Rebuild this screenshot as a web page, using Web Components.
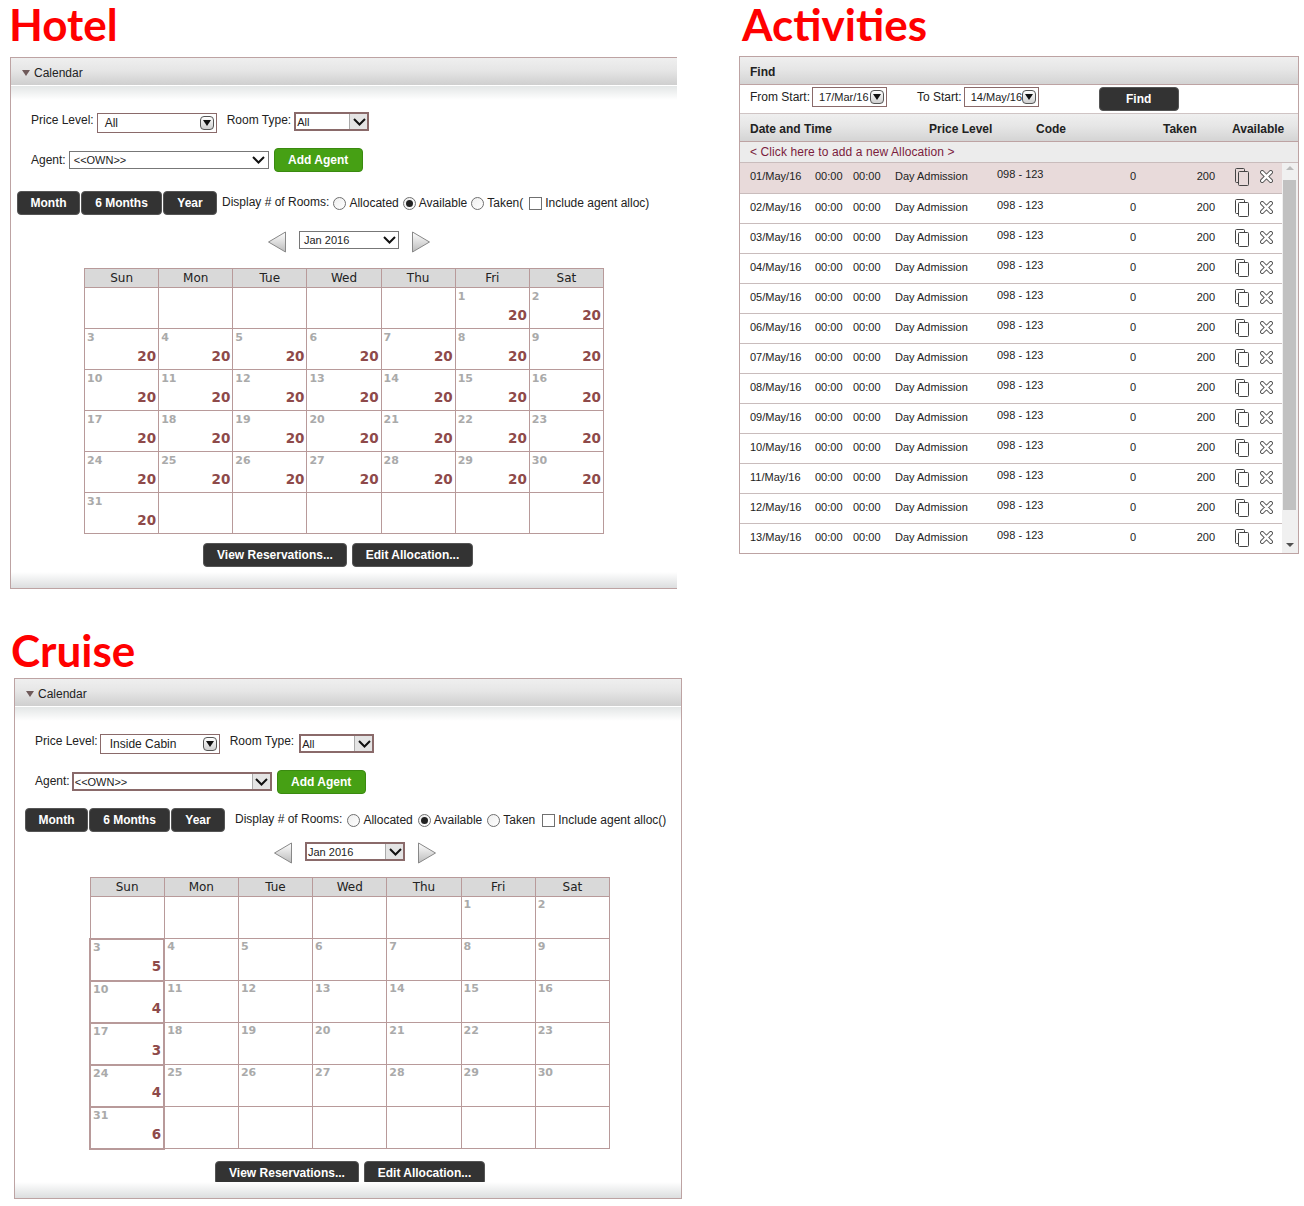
<!DOCTYPE html>
<html>
<head>
<meta charset="utf-8">
<title>Allocation screens</title>
<style>
  body { margin: 0; background: #fff; font: 12px "Liberation Sans", Arial, sans-serif; color: #222; }
</style>
</head>
<body>
<x-page>
  <x-block style="--title-h:57px; --left:10px; --title-left:-1px">
    <span slot="title">Hotel</span>
    <x-calendar-panel price="All" agent-kind="plain" taken="Taken(" alloc="Include agent alloc)" values="hotel"></x-calendar-panel>
  </x-block>
  <x-block style="--title-h:56px; --left:0px; --title-left:3px">
    <span slot="title">Activities</span>
    <x-activities></x-activities>
  </x-block>
  <x-block class="cruise" style="--title-h:78px; --title-top:26px; --left:14px; --title-left:-3px">
    <span slot="title">Cruise</span>
    <x-calendar-panel cruise price="Inside Cabin" agent-kind="box" taken="Taken" alloc="Include agent alloc()" values="cruise"></x-calendar-panel>
  </x-block>
</x-page>

<script>
const ARROW_DOWN = `<svg width="8" height="6" viewBox="0 0 8 6"><path d="M0 0h8L4 6z" fill="#111"/></svg>`;
const CHEVRON = `<svg width="13" height="8" viewBox="0 0 13 8"><path d="M1 1l5.5 5.5L12 1" fill="none" stroke="#111" stroke-width="2"/></svg>`;

class XPage extends HTMLElement {
  constructor() {
    super();
    this.attachShadow({ mode: "open" });
    this.shadowRoot.innerHTML = `
    <style>
      :host { display: grid; grid-template-columns: 739px 565px; grid-template-rows: 600px auto; width: 1304px; }
    </style>
    <slot></slot>`;
  }
}

class XBlock extends HTMLElement {
  constructor() {
    super();
    this.attachShadow({ mode: "open" });
    this.shadowRoot.innerHTML = `
    <style>
      :host { display: block; padding-left: var(--left); }
      h1 {
        margin: 0 0 0 var(--title-left);
        box-sizing: border-box;
        height: var(--title-h);
        padding-top: var(--title-top, 0);
        font: bold 44px/48px Lato, sans-serif;
        color: #f00;
      }
    </style>
    <h1><slot name="title"></slot></h1>
    <slot></slot>`;
  }
}

class XButton extends HTMLElement {
  constructor() {
    super();
    this.attachShadow({ mode: "open" });
    this.shadowRoot.innerHTML = `
    <style>
      :host {
        display: inline-flex; align-items: center; justify-content: center;
        box-sizing: border-box; height: 24px; padding: 0 13px;
        background: #333; border: 1px solid #555; border-radius: 4px;
        color: #fff; font: bold 12px "Liberation Sans", Arial, sans-serif; white-space: nowrap;
      }
      :host([green]) { background: #46a014; border-color: #3a8a10; }
    </style>
    <slot></slot>`;
  }
}

class XSelect extends HTMLElement {
  connectedCallback() {
    const kind = this.getAttribute("kind") || "plain";
    const icon = kind === "round" ? ARROW_DOWN : CHEVRON;
    this.attachShadow({ mode: "open" });
    this.shadowRoot.innerHTML = `
    <style>
      :host {
        display: flex; align-items: center; box-sizing: border-box;
        background: #fff; border: 1px solid #777; color: #222;
        font-size: 11px; white-space: nowrap; overflow: hidden; position: relative;
      }
      .text { flex: 1; padding-left: 4px; }
      .btn { display: flex; align-items: center; justify-content: center; }
      :host([kind="plain"]) .btn { width: 18px; align-self: stretch; }
      :host([kind="box"]) { border: 1px solid #8a6a6a; outline: 1px solid #8a6a6a; outline-offset: -2px; }
      :host([kind="box"]) .text { padding-left: 2px; }
      :host([kind="box"]) .btn { width: 18px; align-self: stretch; background: #e4e4e4; border-left: 1px solid #aaa; }
      :host([kind="round"]) { border-color: #8a6a6a; font-size: var(--round-size, 12px); }
      :host([kind="round"]) .text { padding-left: var(--pad, 7px); }
      :host([kind="round"]) .btn {
        width: 14px; height: 14px; box-sizing: border-box; margin-right: 2px;
        border: 1px solid #555; border-radius: 4px;
        background: linear-gradient(#fff, #cfcfcf);
      }
    </style>
    <span class="text"><slot></slot></span>
    <span class="btn">${icon}</span>`;
  }
}

class XRadio extends HTMLElement {
  constructor() {
    super();
    this.attachShadow({ mode: "open" });
    this.shadowRoot.innerHTML = `
    <style>
      :host { display: inline-flex; align-items: center; white-space: nowrap; }
      :host([square]) { margin-left: 2px; }
      i {
        box-sizing: border-box; width: 13px; height: 13px; margin-right: 3px;
        border: 1px solid #6f6f6f; border-radius: 50%; background: linear-gradient(135deg, #eee, #fff);
        display: flex; align-items: center; justify-content: center;
      }
      :host([square]) i { border-radius: 0; border-color: #707070; background: #fff; }
      :host([checked]) i::after { content: ""; width: 7px; height: 7px; border-radius: 50%; background: #222; }
    </style>
    <i></i><slot></slot>`;
  }
}

class XCalendar extends HTMLElement {
  connectedCallback() {
    const values = this.getAttribute("values");
    const cruiseVals = { 3: 5, 10: 4, 17: 3, 24: 4, 31: 6 };
    const head = ["Sun", "Mon", "Tue", "Wed", "Thu", "Fri", "Sat"].map(d => `<th>${d}</th>`).join("");
    let rows = "";
    let day = -4;
    for (let r = 0; r < 6; r++) {
      rows += "<tr>";
      for (let c = 0; c < 7; c++) {
        const d = day++;
        if (d < 1 || d > 31) { rows += `<td></td>`; continue; }
        let val = "";
        let cls = "";
        if (values === "hotel") val = 20;
        if (values === "cruise" && cruiseVals[d]) { val = cruiseVals[d]; cls = "mark"; }
        rows += `<td class="${cls}"><div class="c"><span class="d">${d}</span><span class="v">${val}</span></div></td>`;
      }
      rows += "</tr>";
    }
    this.attachShadow({ mode: "open" });
    this.shadowRoot.innerHTML = `
    <style>
      :host { display: block; font-family: "DejaVu Sans", Verdana, sans-serif; }
      table { border-collapse: collapse; table-layout: fixed; width: 100%; }
      th, td { border: 1px solid #b89a9a; padding: 0; }
      tr { height: var(--row-h, 41px); }
      tr:first-child { height: 19px; }
      th { background: #d9d9d9; font-weight: normal; font-size: 12px; color: #222; }
      td { vertical-align: top; }
      td.mark { border-width: 2px; }
      .c { box-sizing: border-box; display: flex; flex-direction: column; padding: var(--c-top, 2px) 2px 0 2px; }
      .d { font-size: 11px; line-height: 14px; font-weight: bold; color: #aaa; }
      .v { font-size: 13.5px; line-height: 16px; margin-top: 3px; font-weight: bold; color: #8e4a4a; text-align: right; }
    </style>
    <table><tr>${head}</tr>${rows}</table>`;
  }
}

class XCalendarPanel extends HTMLElement {
  connectedCallback() {
    const left = `<svg width="20" height="22" viewBox="0 0 20 22"><defs><linearGradient id="a" x1="0" y1="0" x2="0" y2="1"><stop offset="0" stop-color="#fff"/><stop offset="1" stop-color="#bbb"/></linearGradient></defs><path d="M18.5 1v20L1.5 11z" fill="url(#a)" stroke="#888" stroke-linejoin="round"/></svg>`;
    const right = `<svg width="20" height="22" viewBox="0 0 20 22"><defs><linearGradient id="b" x1="0" y1="0" x2="0" y2="1"><stop offset="0" stop-color="#fff"/><stop offset="1" stop-color="#bbb"/></linearGradient></defs><path d="M1.5 1v20l17-10z" fill="url(#b)" stroke="#888" stroke-linejoin="round"/></svg>`;
    this.attachShadow({ mode: "open" });
    this.shadowRoot.innerHTML = `
    <style>
      :host {
        display: block; box-sizing: border-box; width: 667px; height: 532px;
        border: 1px solid #bda3a3; border-right: 0; position: relative;
      }
      :host([cruise]) { width: 668px; height: 521px; border-right: 1px solid #bda3a3; }
      .head {
        height: 25px; display: flex; align-items: center; padding: 2px 0 0 11px; gap: 4px;
        background: linear-gradient(#efefef 0, #e6e6e6 45%, #cfcfcf 100%);
        border-bottom: 1px solid #fff; color: #222;
      }
      .head i { width: 0; height: 0; border: 4px solid transparent; border-top: 6px solid #6f5a5a; border-bottom: 0; margin-top: 1px; }
      .fade { height: 14px; background: linear-gradient(#e3e6e6, #fff); }
      .row { display: flex; }
      .r1 { margin-top: 12px; height: 21px; padding-left: 20px; }
      .r2 { margin-top: 15px; height: 24px; padding-left: 20px; }
      .r3 { margin-top: 19px; height: 24px; padding-left: 6px; }
      .r4 { margin-top: 16px; height: 23px; padding-left: 256px; align-items: flex-start; }
      .lab { line-height: 14px; white-space: nowrap; }
      .r1 .lab { margin-top: 1px; }
      .views { display: flex; gap: 1px; }
      .show { display: flex; align-items: center; margin-left: 5px; gap: 4px; }
      .show span.t { margin-bottom: 3px; }
      .price { width: 120px; height: 20px; margin: 1px 10px 0 3px; }
      .room { width: 75px; height: 19px; margin-left: 3px; }
      .agent { width: 200px; height: 18px; margin: 3px 5px 0 3px; }
      .r2 .lab { margin-top: 5px; }
      .month { width: 100px; height: 18px; margin: 0 12px; }
      x-calendar { width: 520px; margin: 14px 0 0 73px; }
      .foot { display: flex; gap: 5px; margin: 9px 0 0 192px; }
      .bottom {
        position: absolute; left: 0; right: 0; bottom: 0; height: 16px;
        background: linear-gradient(#fff, #dcdedf);
      }
      .view-res { width: 144px; }
      .edit-all { width: 121px; }
      :host([cruise]) .r1 { margin-top: 13px; }
      :host([cruise]) .r1 .lab { margin-top: 0; }
      :host([cruise]) .price { margin: 0 10px 0 2px; --pad: 9px; }
      :host([cruise]) .room { margin-left: 5px; }
      :host([cruise]) .r2 { margin-top: 15px; }
      :host([cruise]) .r2 .lab { margin-top: 4px; }
      :host([cruise]) .agent { height: 19px; margin: 2px 5px 0 2px; }
      :host([cruise]) .r3 { margin-top: 14px; padding-left: 10px; }
      :host([cruise]) .show { margin-left: 10px; gap: 5px; }
      :host([cruise]) .r4 { margin-top: 10px; padding-left: 258px; height: 22px; }
      :host([cruise]) .month { height: 19px; }
      :host([cruise]) x-calendar { width: 521px; margin: 13px 0 0 74px; --row-h: 42px; --c-top: 1px; }
      :host([cruise]) .foot { margin: 11px 0 0 200px; }
    </style>
    <div class="head"><i></i><span>Calendar</span></div>
    <div class="fade"></div>
    <div class="row r1">
      <span class="lab">Price Level:</span>
      <x-select class="price" kind="round">${this.getAttribute("price")}</x-select>
      <span class="lab">Room Type:</span>
      <x-select class="room" kind="box">All</x-select>
    </div>
    <div class="row r2">
      <span class="lab">Agent:</span>
      <x-select class="agent" kind="${this.getAttribute("agent-kind")}">&lt;&lt;OWN&gt;&gt;</x-select>
      <x-button green style="width:89px">Add Agent</x-button>
    </div>
    <div class="row r3">
      <div class="views"><x-button style="width:63px">Month</x-button><x-button style="width:81px">6 Months</x-button><x-button style="width:54px">Year</x-button></div>
      <div class="show">
        <span class="t">Display # of Rooms:</span>
        <x-radio>Allocated</x-radio>
        <x-radio checked>Available</x-radio>
        <x-radio>${this.getAttribute("taken")}</x-radio>
        <x-radio square>${this.getAttribute("alloc")}</x-radio>
      </div>
    </div>
    <div class="row r4">
      ${left}
      <x-select class="month" kind="${this.hasAttribute("cruise") ? "box" : "plain"}">Jan 2016</x-select>
      ${right}
    </div>
    <x-calendar values="${this.getAttribute("values")}"></x-calendar>
    <div class="foot"><x-button class="view-res">View Reservations...</x-button><x-button class="edit-all">Edit Allocation...</x-button></div>
    <div class="bottom"></div>`;
  }
}

class XActivityRow extends HTMLElement {
  connectedCallback() {
    this.attachShadow({ mode: "open" });
    this.shadowRoot.innerHTML = `
    <style>
      :host {
        display: grid; box-sizing: border-box; height: 30px; padding: 6px 0 0 10px;
        grid-template-columns: 65px 38px 42px 102px 133px 35px 50px 25px auto;
        border-bottom: 1px solid #c9bcbc; font-size: 11px; line-height: 14px; color: #222; white-space: nowrap;
      }
      :host([active]) { background: #e8dada; height: 31px; }
      .code { margin-top: -2px; }
      .avail { text-align: right; }
      svg { display: block; margin-top: -1px; }
      .ic2 { margin-top: 1px; }
    </style>
    <span>${this.getAttribute("date")}</span><span>00:00</span><span>00:00</span>
    <span>Day Admission</span><span class="code">098 - 123</span><span>0</span>
    <span class="avail">200</span>
    <svg style="margin-left:20px" width="14" height="18" viewBox="0 0 14 18" fill="none" stroke="#444"><path d="M9.5 3.5v-2a1 1 0 0 0-1-1h-7a1 1 0 0 0-1 1v12a1 1 0 0 0 1 1h2"/><rect x="3.5" y="3.5" width="10" height="14" rx="1"/></svg>
    <svg class="ic2" style="margin-left:20px" width="13" height="13" viewBox="0 0 13 13" fill="none" stroke-linecap="round"><path d="M2.2 2.2l8.6 8.6M10.8 2.2l-8.6 8.6" stroke="#555" stroke-width="4.4"/><path d="M2.2 2.2l8.6 8.6M10.8 2.2l-8.6 8.6" stroke="#fff" stroke-width="2.4"/></svg>`;
  }
}

class XActivities extends HTMLElement {
  connectedCallback() {
    let rows = "";
    for (let i = 1; i <= 13; i++) {
      const date = String(i).padStart(2, "0") + "/May/16";
      rows += `<x-activity-row date="${date}"${i === 1 ? " active" : ""}></x-activity-row>`;
    }
    this.attachShadow({ mode: "open" });
    this.shadowRoot.innerHTML = `
    <style>
      :host { display: block; box-sizing: border-box; width: 560px; height: 498px; border: 1px solid #bda3a3; overflow: hidden; }
      .bar {
        display: flex; align-items: center; height: 28px; padding: 3px 0 0 10px; box-sizing: border-box;
        background: linear-gradient(#efefef, #e6e6e6 45%, #d4d4d4);
        border-bottom: 1px solid #bda3a3; font-weight: bold;
      }
      .find { display: flex; height: 28px; padding: 2px 0 0 10px; box-sizing: border-box; --round-size: 11px; --pad: 6px; }
      .find span { line-height: 14px; margin-top: 3px; }
      .d { width: 75px; height: 20px; margin: 0 30px 0 4px; }
      .first { margin-left: 2px; }
      .d2 { margin: 0 60px 0 2px; }
      .cols {
        display: grid; grid-template-columns: 179px 107px 127px 69px auto; align-items: center;
        height: 29px; padding: 3px 0 0 10px; box-sizing: border-box;
        border-top: 1px solid #cfc4c4; border-bottom: 1px solid #bda3a3;
        background: linear-gradient(#efefef, #e6e6e6 45%, #d4d4d4);
        font-weight: bold;
      }
      .add { height: 21px; line-height: 20px; padding-left: 10px; box-sizing: border-box; background: #ececec; color: #7b1c3c; border-bottom: 1px solid #c9bcbc; letter-spacing: .1px; }
      .list { display: flex; height: 390px; }
      .rows { width: 542px; }
      .scroll { width: 16px; background: #f0f0f0; position: relative; }
      .thumb { position: absolute; top: 17px; left: 1px; width: 13px; height: 330px; background: #c1c1c1; }
      .up, .down { position: absolute; left: 4px; width: 0; height: 0; border: 4px solid transparent; }
      .up { top: 3px; border-bottom: 4px solid #bbb; border-top: 0; }
      .down { bottom: 6px; border-top: 4px solid #505050; border-bottom: 0; }
    </style>
    <div class="bar">Find</div>
    <div class="find">
      <span>From Start:</span><x-select class="d first" kind="round">17/Mar/16</x-select>
      <span>To Start:</span><x-select class="d d2" kind="round">14/May/16</x-select>
      <x-button style="width:80px;height:24px">Find</x-button>
    </div>
    <div class="cols"><span>Date and Time</span><span>Price Level</span><span>Code</span><span>Taken</span><span>Available</span></div>
    <div class="add">&lt; Click here to add a new Allocation &gt;</div>
    <div class="list">
      <div class="rows">${rows}</div>
      <div class="scroll"><i class="up"></i><i class="thumb"></i><i class="down"></i></div>
    </div>`;
  }
}

customElements.define("x-page", XPage);
customElements.define("x-block", XBlock);
customElements.define("x-button", XButton);
customElements.define("x-select", XSelect);
customElements.define("x-radio", XRadio);
customElements.define("x-calendar", XCalendar);
customElements.define("x-calendar-panel", XCalendarPanel);
customElements.define("x-activity-row", XActivityRow);
customElements.define("x-activities", XActivities);
</script>
</body>
</html>
